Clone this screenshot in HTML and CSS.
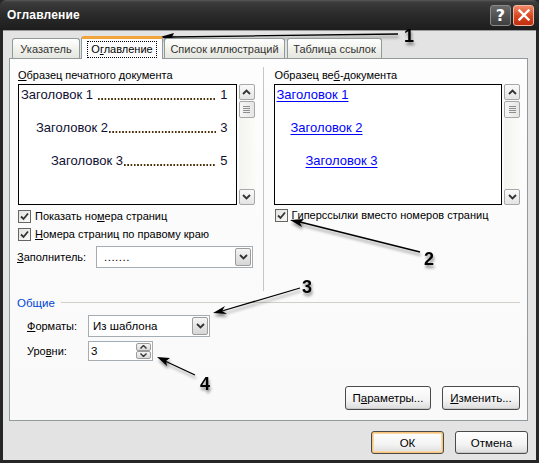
FILE: index.html
```html
<!DOCTYPE html>
<html lang="ru">
<head>
<meta charset="utf-8">
<title>Оглавление</title>
<link rel="stylesheet" href="styles.css">
</head>
<body>
<div class="win">
  <div class="titlebar">
    <span class="title">Оглавление</span>
    <div class="tbtns">
      <span class="tb help">?</span>
      <span class="tb close"><svg width="12" height="12" viewBox="0 0 12 12"><path d="M1.5 1.5L10.5 10.5M10.5 1.5L1.5 10.5" stroke="#fff" stroke-width="2.4" stroke-linecap="square"/></svg></span>
    </div>
  </div>
  <div class="body">
    <div class="tabs">
      <div class="tab">Указатель</div>
      <div class="tab active"><span class="focus">О<u>г</u>лавление</span></div>
      <div class="tab">Список иллюстраций</div>
      <div class="tab">Таблица ссылок</div>
    </div>
    <div class="panel">
      <div class="cols">
        <div class="col col-left">
          <div class="label"><u>О</u>бразец печатного документа</div>
          <div class="preview">
            <div class="pbox">
              <div class="toc l1"><span>Заголовок 1</span><span class="dots"></span><span>1</span></div>
              <div class="toc l2"><span>Заголовок 2</span><span class="dots"></span><span>3</span></div>
              <div class="toc l3"><span>Заголовок 3</span><span class="dots"></span><span>5</span></div>
            </div>
            <div class="sbar">
              <span class="sbtn"><svg width="9" height="6" viewBox="0 0 9 6"><path d="M1 5L4.5 1.5L8 5" fill="none" stroke="#333" stroke-width="1.8"/></svg></span>
              <span class="thumb"><i></i><i></i><i></i><i></i></span>
              <span class="strack"></span>
              <span class="sbtn"><svg width="9" height="6" viewBox="0 0 9 6"><path d="M1 1L4.5 4.5L8 1" fill="none" stroke="#333" stroke-width="1.8"/></svg></span>
            </div>
          </div>
          <div class="check first"><span class="cb"><svg width="9" height="9" viewBox="0 0 9 9"><path d="M1 4.5L3.5 7L8 1.5" fill="none" stroke="#333" stroke-width="1.8"/></svg></span>Показать но<u>м</u>ера страниц</div>
          <div class="check"><span class="cb"><svg width="9" height="9" viewBox="0 0 9 9"><path d="M1 4.5L3.5 7L8 1.5" fill="none" stroke="#333" stroke-width="1.8"/></svg></span><u>Н</u>омера страниц по правому краю</div>
          <div class="field">
            <span class="flabel"><u>З</u>аполнитель:</span>
            <div class="combo wide"><span class="cval">.......</span><span class="dbtn"><svg width="9" height="6" viewBox="0 0 9 6"><path d="M1 1L4.5 4.5L8 1" fill="none" stroke="#333" stroke-width="1.8"/></svg></span></div>
          </div>
        </div>
        <div class="vsep"></div>
        <div class="col col-right">
          <div class="label">Образец ве<u>б</u>-документа</div>
          <div class="preview">
            <div class="pbox wbox">
              <div class="link w1">Заголовок 1</div>
              <div class="link w2">Заголовок 2</div>
              <div class="link w3">Заголовок 3</div>
            </div>
            <div class="sbar">
              <span class="sbtn"><svg width="9" height="6" viewBox="0 0 9 6"><path d="M1 5L4.5 1.5L8 5" fill="none" stroke="#333" stroke-width="1.8"/></svg></span>
              <span class="thumb"><i></i><i></i><i></i><i></i></span>
              <span class="strack"></span>
              <span class="sbtn"><svg width="9" height="6" viewBox="0 0 9 6"><path d="M1 1L4.5 4.5L8 1" fill="none" stroke="#333" stroke-width="1.8"/></svg></span>
            </div>
          </div>
          <div class="check first"><span class="cb"><svg width="9" height="9" viewBox="0 0 9 9"><path d="M1 4.5L3.5 7L8 1.5" fill="none" stroke="#333" stroke-width="1.8"/></svg></span><u>Г</u>иперссылки вместо номеров страниц</div>
        </div>
      </div>
      <div class="group-head"><span>Общие</span><span class="gline"></span></div>
      <div class="grow">
        <span class="glabel"><u>Ф</u>орматы:</span>
        <div class="combo fmt"><span class="cval">Из шаблона</span><span class="dbtn"><svg width="9" height="6" viewBox="0 0 9 6"><path d="M1 1L4.5 4.5L8 1" fill="none" stroke="#333" stroke-width="1.8"/></svg></span></div>
      </div>
      <div class="grow">
        <span class="glabel">Уро<u>в</u>ни:</span>
        <div class="spin"><span class="cval">3</span><span class="sbtns"><span class="sb"><svg width="7" height="4" viewBox="0 0 7 4"><path d="M0.5 3.5L3.5 0.5L6.5 3.5" fill="none" stroke="#333" stroke-width="1.4"/></svg></span><span class="sb"><svg width="7" height="4" viewBox="0 0 7 4"><path d="M0.5 0.5L3.5 3.5L6.5 0.5" fill="none" stroke="#333" stroke-width="1.4"/></svg></span></span></div>
      </div>
      <div class="actions">
        <span class="btn b-par">П<u>а</u>раметры...</span>
        <span class="btn b-chg"><u>И</u>зменить...</span>
      </div>
    </div>
    <div class="footer">
      <span class="btn fbtn ok">ОК</span>
      <span class="btn fbtn">Отмена</span>
    </div>
  </div>
  <svg class="annot" width="539" height="463" viewBox="0 0 539 463">
    <defs>
      <filter id="sh" x="-20%" y="-50%" width="140%" height="200%">
        <feGaussianBlur in="SourceAlpha" stdDeviation="1.6"/>
        <feOffset dx="1" dy="3" result="b"/>
        <feComponentTransfer><feFuncA type="linear" slope="0.45"/></feComponentTransfer>
        <feMerge><feMergeNode/><feMergeNode in="SourceGraphic"/></feMerge>
      </filter>
    </defs>
    <g filter="url(#sh)" fill="#000" stroke="#000">
      <line x1="398" y1="34" x2="170" y2="37" stroke-width="1.3"/>
      <path d="M160 37L174 33L172 37L174 41Z" stroke="none"/>
      <line x1="420" y1="252" x2="300" y2="222" stroke-width="1.3"/>
      <path d="M290 220L304 219L300 223L302 227Z" stroke="none"/>
      <line x1="300" y1="288" x2="222" y2="311" stroke-width="1.3"/>
      <path d="M213 313L225 306L222 311L227 314Z" stroke="none"/>
      <line x1="195" y1="375" x2="165" y2="361" stroke-width="1.3"/>
      <path d="M157 357L170 358L166 361L167 366Z" stroke="none"/>
    </g>
    <g class="nums" filter="url(#sh)">
      <text x="404" y="42">1</text>
      <text x="424" y="265">2</text>
      <text x="302" y="293">3</text>
      <text x="200" y="390">4</text>
    </g>
  </svg>
</div>
</body>
</html>
```
FILE: styles.css
```css
* { box-sizing: border-box; }
html, body { margin: 0; padding: 0; }
body {
  width: 539px;
  height: 463px;
  overflow: hidden;
  font-family: "Liberation Sans", Arial, sans-serif;
  font-size: 11px;
  color: #000;
  background: #fff;
}
u { text-decoration: underline; text-underline-offset: 1px; }
.win {
  position: relative;
  width: 539px;
  height: 463px;
  background: #262626;
}
.titlebar {
  height: 30px;
  display: flex;
  align-items: center;
  justify-content: space-between;
  padding: 0 5px 0 7px;
  background: linear-gradient(#5a5a5a 0, #3c3c3c 2px, #2c2c2c 45%, #1d1d1d 100%);
  border-radius: 6px 6px 0 0;
}
.title {
  color: #fff;
  font-weight: bold;
  font-size: 12px;
  letter-spacing: 0.2px;
}
.tbtns { display: flex; gap: 2px; }
.tb {
  width: 21px;
  height: 21px;
  border-radius: 3px;
  display: flex;
  align-items: center;
  justify-content: center;
  color: #fff;
  font-weight: bold;
  font-size: 16px;
  font-family: "DejaVu Sans", sans-serif;
}
.help {
  background: linear-gradient(#6a6a6a, #3e3e3e);
  border: 1px solid #8a8a8a;
}
.close {
  background: linear-gradient(#f08a6a, #d8441e 55%, #c03010);
  border: 1px solid #f3b6a0;
}
.body {
  margin: 0 3px;
  height: 430px;
  background: #e3e3e3;
  border-top: 1px solid #9a9a9a;
  padding: 4px 8px 0 6px;
  display: flex;
  flex-direction: column;
}
.tabs {
  display: flex;
  align-items: flex-end;
  padding-left: 3px;
  height: 23px;
  position: relative;
  z-index: 2;
}
.tab {
  height: 20px;
  padding: 0 4px;
  margin-right: 2px;
  border: 1px solid #919b9c;
  border-bottom: none;
  border-radius: 3px 3px 0 0;
  background: linear-gradient(#ffffff, #f0f0ea 60%, #e6e6e0);
  display: flex;
  align-items: center;
  justify-content: center;
  color: #333;
  font-size: 11px;
  white-space: nowrap;
}
.tab:first-child { width: 68px; }
.tab.active {
  height: 23px;
  margin: 0 1px 0 -1px;
  width: 82px;
  background: #fcfcfe;
  border-top: 3px solid #f2a43c;
  margin-bottom: -1px;
  padding: 0;
  color: #000;
}
.focus {
  border: 1px dotted #000;
  padding: 1px 3px;
  line-height: 13px;
}
.tab:nth-child(3) { width: 121px; }
.tab:nth-child(4) { width: 95px; }
.panel {
  height: 363px;
  border: 1px solid #919b9c;
  background: linear-gradient(#fdfdfe, #f9f9fa);
  display: flex;
  flex-direction: column;
}
.cols {
  display: flex;
  height: 232px;
  padding: 0 7px 0 8px;
}
.col { display: flex; flex-direction: column; padding-top: 10px; }
.col-left { width: 237px; }
.col-right { width: 247px; }
.vsep {
  width: 1px;
  background: #c6c6c6;
  margin: 8px 10px 0 8px;
}
.label { line-height: 13px; height: 13px; margin-bottom: 2px; }
.col-right .label { padding-left: 1px; }
.preview { display: flex; height: 121px; }
.pbox {
  flex: 1;
  border: 1px solid #000;
  background: #fff;
  margin-right: 2px;
  padding: 2px 8px 0 2px;
  font-size: 13px;
  color: #101033;
  overflow: hidden;
}
.toc {
  display: flex;
  white-space: nowrap;
  line-height: 16px;
  height: 33px;
}
.toc .dots {
  flex: 1;
  height: 16px;
  margin: 0 4px 0 5px;
  background-image: linear-gradient(90deg, #4a2e06 1.4px, transparent 1.4px);
  background-size: 3.3px 2px;
  background-repeat: repeat-x;
  background-position: 0 11px;
}
.l2 { padding-left: 15px; }
.l2 .dots, .l3 .dots { margin-left: 1px; }
.l3 { padding-left: 30px; }
.wbox { padding: 2px 0 0 2px; }
.link {
  color: #0000ff;
  text-decoration: underline;
  text-underline-offset: 2px;
  line-height: 16px;
  height: 33px;
}
.w2 { padding-left: 14px; }
.w3 { padding-left: 29px; }
.sbar {
  width: 16px;
  display: flex;
  flex-direction: column;
  background: linear-gradient(90deg, #f3f3ef, #fbfbf8);
}
.sbtn {
  height: 16px;
  border: 1px solid #a7a7a7;
  border-radius: 2px;
  background: linear-gradient(#fafafa, #e4e4e4);
  display: flex;
  align-items: center;
  justify-content: center;
}
.thumb {
  height: 17px;
  margin-top: 1px;
  border: 1px solid #a7a7a7;
  border-radius: 2px;
  background: linear-gradient(90deg, #f6f6f6, #e6e6e6);
  display: flex;
  flex-direction: column;
  align-items: center;
  justify-content: center;
  gap: 1px;
}
.thumb i { display: block; width: 7px; height: 1px; background: #8e8e8e; }
.strack { flex: 1; }
.check {
  display: flex;
  align-items: center;
  line-height: 14px;
  height: 14px;
  margin-top: 4px;
}
.col-right .check.first { margin-top: 3px; padding-left: 1px; }
.cb {
  width: 13px;
  height: 13px;
  border: 1px solid #666;
  background: linear-gradient(135deg, #e2e2de, #fafafa);
  display: flex;
  align-items: center;
  justify-content: center;
  margin-right: 4px;
}
.field {
  display: flex;
  align-items: center;
  margin-top: 5px;
}
.flabel { width: 79px; margin-left: -1px; }
.combo {
  display: flex;
  align-items: center;
  height: 22px;
  border: 1px solid #a5acb2;
  background: #fff;
  padding: 1px;
}
.combo.wide { width: 157px; }
.cval { flex: 1; padding-left: 3px; font-size: 11.5px; }
.wide .cval { padding-left: 6px; letter-spacing: 0.5px; }
.dbtn {
  width: 16px;
  height: 18px;
  border: 1px solid #9c9c9c;
  border-radius: 2px;
  background: linear-gradient(#f5f5f5, #d6d6d6);
  display: flex;
  align-items: center;
  justify-content: center;
}
.group-head {
  display: flex;
  align-items: center;
  margin-top: 5px;
  padding: 0 7px;
  height: 13px;
  color: #0046d5;
  font-size: 11.5px;
}
.gline { flex: 1; height: 1px; background: #d0d0c8; margin-left: 6px; }
.grow {
  display: flex;
  align-items: center;
  padding-left: 17px;
}
.group-head + .grow { margin-top: 6px; }
.grow + .grow { margin-top: 4px; }
.glabel { width: 61px; }
.combo.fmt { width: 122px; }
.spin {
  width: 65px;
  height: 20px;
  border: 1px solid #a5acb2;
  background: #fff;
  display: flex;
  align-items: center;
  padding: 1px;
}
.spin .cval { padding-left: 1px; }
.sbtns { display: flex; flex-direction: column; width: 15px; height: 16px; }
.sb {
  flex: 1;
  border: 1px solid #9c9c9c;
  border-radius: 2px;
  background: linear-gradient(#f5f5f5, #d9d9d9);
  display: flex;
  align-items: center;
  justify-content: center;
}
.actions {
  display: flex;
  justify-content: flex-end;
  gap: 11px;
  padding-right: 7px;
  margin-top: 25px;
}
.btn {
  height: 24px;
  border: 1px solid #4a4a4a;
  border-radius: 3px;
  background: linear-gradient(#ffffff, #f3f3f3 60%, #dcdcdc);
  display: flex;
  align-items: center;
  justify-content: center;
  font-size: 11.5px;
  box-shadow: inset 0 -1px 0 #c8c8c8;
}
.b-par { width: 86px; }
.b-chg { width: 78px; }
.footer {
  display: flex;
  justify-content: flex-end;
  gap: 11px;
  padding-top: 10px;
}
.fbtn { width: 73px; height: 23px; }
.ok {
  box-shadow: inset 0 0 0 1px #f7c27a, inset 0 0 0 2px #fbd9a6;
}
.annot {
  position: absolute;
  left: 0;
  top: 0;
  pointer-events: none;
}
.nums text {
  font-family: "Liberation Sans", Arial, sans-serif;
  font-weight: bold;
  font-size: 18px;
  fill: #000;
}
```
